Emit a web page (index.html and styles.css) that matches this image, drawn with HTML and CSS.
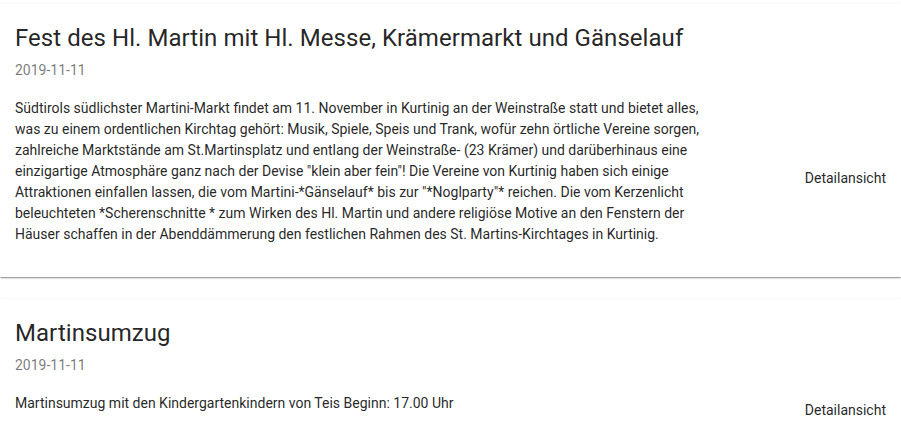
FILE: index.html
```html
<!DOCTYPE html>
<html lang="de">
<head>
<meta charset="utf-8">
<link rel="stylesheet" href="styles.css">
</head>
<body>
<div class="list">
  <div class="card">
    <h2 class="title">Fest des Hl. Martin mit Hl. Messe, Krämermarkt und Gänselauf</h2>
    <div class="date">2019-11-11</div>
    <div class="row">
      <p class="text">Südtirols südlichster Martini-Markt findet am 11. November in Kurtinig an der Weinstraße statt und bietet alles, was zu einem ordentlichen Kirchtag gehört: Musik, Spiele, Speis und Trank, wofür zehn örtliche Vereine sorgen, zahlreiche Marktstände am St.Martinsplatz und entlang der Weinstraße- (23 Krämer) und darüberhinaus eine einzigartige Atmosphäre ganz nach der Devise "klein aber fein"! Die Vereine von Kurtinig haben sich einige Attraktionen einfallen lassen, die vom Martini-*Gänselauf* bis zur "*Noglparty"* reichen. Die vom Kerzenlicht beleuchteten *Scherenschnitte * zum Wirken des Hl. Martin und andere religiöse Motive an den Fenstern der Häuser schaffen in der Abenddämmerung den festlichen Rahmen des St. Martins-Kirchtages in Kurtinig.</p>
      <a class="btn">Detailansicht</a>
    </div>
  </div>
  <div class="card">
    <h2 class="title">Martinsumzug</h2>
    <div class="date">2019-11-11</div>
    <div class="row">
      <p class="text">Martinsumzug mit den Kindergartenkindern von Teis Beginn: 17.00 Uhr</p>
      <a class="btn">Detailansicht</a>
    </div>
  </div>
</div>
</body>
</html>
```

FILE: styles.css
```css
html, body {
  margin: 0;
  padding: 0;
  background: #fff;
}
body {
  font-family: Roboto, "Liberation Sans", sans-serif;
  color: rgba(0, 0, 0, 0.87);
}
.list {
  display: flex;
  flex-direction: column;
  gap: 22px;
  padding-top: 4px;
}
.card {
  background: #fff;
  padding: 18px 15px 20px 15px;
  box-shadow: 0 2px 1px -1px rgba(0,0,0,.2), 0 1px 1px 0 rgba(0,0,0,.14), 0 1px 3px 0 rgba(0,0,0,.12);
}
.title {
  margin: 0;
  font-size: 24px;
  font-weight: 400;
  line-height: 32px;
  letter-spacing: 0.05px;
}
.date {
  margin-top: 6px;
  font-size: 14px;
  line-height: 20px;
  color: rgba(0, 0, 0, 0.54);
}
.row {
  display: flex;
  align-items: center;
  justify-content: space-between;
  margin-top: 18px;
}
.text {
  margin: 0 0 12px 0;
  width: 700px;
  font-size: 14px;
  line-height: 21px;
}
.btn {
  font-size: 14px;
  line-height: 20px;
  color: rgba(0, 0, 0, 0.87);
  padding: 0;
}
```
